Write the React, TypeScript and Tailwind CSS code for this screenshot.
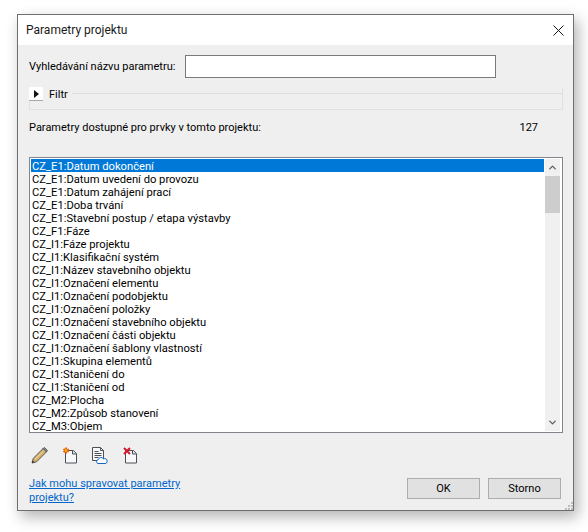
import { ChevronDown, ChevronUp } from 'lucide-react'

const PARAMS = [
  'CZ_E1:Datum dokončení',
  'CZ_E1:Datum uvedení do provozu',
  'CZ_E1:Datum zahájení prací',
  'CZ_E1:Doba trvání',
  'CZ_E1:Stavební postup / etapa výstavby',
  'CZ_F1:Fáze',
  'CZ_I1:Fáze projektu',
  'CZ_I1:Klasifikační systém',
  'CZ_I1:Název stavebního objektu',
  'CZ_I1:Označení elementu',
  'CZ_I1:Označení podobjektu',
  'CZ_I1:Označení položky',
  'CZ_I1:Označení stavebního objektu',
  'CZ_I1:Označení části objektu',
  'CZ_I1:Označení šablony vlastností',
  'CZ_I1:Skupina elementů',
  'CZ_I1:Staničení do',
  'CZ_I1:Staničení od',
  'CZ_M2:Plocha',
  'CZ_M2:Způsob stanovení',
  'CZ_M3:Objem',
]

const Sheet = () => (
  <>
    <path d="M4.5 3.5h8l3 3v9.5h-11z" fill="#f8f8f8" stroke="#4a5058" />
    <path d="M11.5 3.5v3.5h4" fill="#dcdcdc" stroke="#4a5058" />
  </>
)

const PencilIcon = () => (
  <svg width="17" height="17" viewBox="0 0 17 17">
    <path d="M1 16l1.2-4.6L12 1.6l3.4 3.4-9.8 9.8z" fill="#d4ad66" stroke="#5b5b5b" />
    <path d="M12 1.6L13.5.5l3 3-1.1 1.5z" fill="#8a8a8a" stroke="#5b5b5b" />
    <path d="M4 12.5L13 3.5" stroke="#f3e2b5" />
    <path d="M1 16l.6-2.6 2 2z" fill="#333" />
  </svg>
)

const NewIcon = () => (
  <svg width="17" height="17" viewBox="0 0 17 17">
    <Sheet />
    <circle cx="5" cy="3.5" r="2.2" fill="#f6b400" stroke="#e8450c" strokeWidth="1.6" strokeDasharray="1.4 0.8" />
  </svg>
)

const CloudIcon = () => (
  <svg width="17" height="17" viewBox="0 0 17 17">
    <path d="M1.5.5h8l3 3V13.5h-11z" fill="#f8f8f8" stroke="#4a5058" />
    <path d="M9.5.5v3h3M3.5 4.5h4M3.5 6.5h7M3.5 8.5h7M3.5 10.5h4" fill="none" stroke="#4a5058" />
    <path d="M7 16.5a2 2 0 0 1 .3-3.9 2.8 2.8 0 0 1 5.2-.6 2.3 2.3 0 0 1 3.6 2.2 2.2 2.2 0 0 1-1.3 2.3z" fill="#fff" stroke="#1565c0" />
  </svg>
)

const DeleteIcon = () => (
  <svg width="17" height="17" viewBox="0 0 17 17">
    <Sheet />
    <path d="M3 1l6 6M9 1L3 7" stroke="#d3182a" strokeWidth="2" />
  </svg>
)

export default function App() {
  return (
    <div className="h-[532px] w-[588px] bg-white pl-[17px] pt-[14px] font-['Roboto',sans-serif] text-[11px] leading-[13px] text-black">
      <div className="relative flex h-[497px] w-[557px] flex-col border border-[#6f6f6f] bg-[#efefef] shadow-[4px_6px_14px_rgba(0,0,0,0.3)]">
        {/* title bar */}
        <div className="flex h-[30px] items-center justify-between bg-white pl-2 pr-[9px]">
          <span className="text-[12px] text-[#1a1a1a]">Parametry projektu</span>
          <svg width="11" height="11" viewBox="0 0 11 11">
            <path d="M.5.5l10 10M10.5.5l-10 10" stroke="#111" />
          </svg>
        </div>

        <div className="flex flex-1 flex-col pl-[11px] pr-[10px]">
          {/* search */}
          <div className="mt-[10px] flex items-center">
            <span className="w-[156px] whitespace-nowrap">Vyhledávání názvu parametru:</span>
            <div className="h-[23px] w-[311px] border border-[#7a7a7a] bg-white" />
          </div>

          {/* collapsed filter */}
          <div className="mt-[9px] h-[23px] w-[534px] border-x border-b border-[#e0e0e0]">
            <div className="-ml-[1px] flex items-start">
              <div className="flex h-[14px] w-[14px] items-center justify-center border-b border-[#a8a8a8] bg-white">
                <svg width="5" height="8" viewBox="0 0 5 8">
                  <path d="M0 0l5 4-5 4z" fill="#111" />
                </svg>
              </div>
              <span className="ml-[6px] mt-[1px]">Filtr</span>
              <div className="ml-[4px] mt-[6px] h-[1px] flex-1 bg-[#dedede]" />
            </div>
          </div>

          {/* count */}
          <div className="mt-[11px] flex w-[534px] justify-between">
            <span>Parametry dostupné pro prvky v tomto projektu:</span>
            <span className="mr-[25px]">127</span>
          </div>

          {/* list */}
          <div className="mt-[23px] flex h-[276px] w-[534px] border border-[#82868c] bg-white py-[1px] pl-[1px] pr-[2px]">
            <ul className="min-w-0 flex-1 overflow-hidden text-[11.2px]">
              {PARAMS.map((name, i) => (
                <li
                  key={name}
                  className={
                    i === 0
                      ? 'h-[13px] whitespace-nowrap bg-[#0078d7] pl-[1px] pt-[1px] text-white'
                      : 'h-[13px] whitespace-nowrap pl-[1px] pt-[1px]'
                  }
                >
                  {name}
                </li>
              ))}
            </ul>
            <div className="ml-[1px] flex w-[15px] flex-col bg-[#f0f0f0]">
              <div className="flex h-[17px] items-center justify-center">
                <ChevronUp size={11} strokeWidth={3} className="text-[#606060]" />
              </div>
              <div className="h-[37px] bg-[#cdcdcd]" />
              <div className="flex-1" />
              <div className="flex h-[17px] items-center justify-center">
                <ChevronDown size={11} strokeWidth={3} className="text-[#606060]" />
              </div>
            </div>
          </div>

          {/* toolbar */}
          <div className="mt-[14px] flex items-center gap-[13px] pl-[2px]">
            <PencilIcon />
            <NewIcon />
            <CloudIcon />
            <DeleteIcon />
          </div>

          {/* footer */}
          <div className="mt-[14px] flex items-start justify-between">
            <a className="-mt-[1px] w-[160px] leading-[14px] text-[#0066cc] underline">Jak mohu spravovat parametry projektu?</a>
            <div className="mr-[2px] flex gap-2">
              <button className="h-[21px] w-[73px] border border-[#adadad] bg-[#e1e1e1]">OK</button>
              <button className="h-[21px] w-[73px] border border-[#adadad] bg-[#e1e1e1]">Storno</button>
            </div>
          </div>
        </div>

        {/* resize grip */}
        <svg width="10" height="10" viewBox="0 0 10 10" className="absolute bottom-0 right-0">
          <path d="M8 2h2v2H8zM5 5h2v2H5zM8 5h2v2H8zM2 8h2v2H2zM5 8h2v2H5zM8 8h2v2H8z" fill="#bdbdbd" />
        </svg>
      </div>
    </div>
  )
}
